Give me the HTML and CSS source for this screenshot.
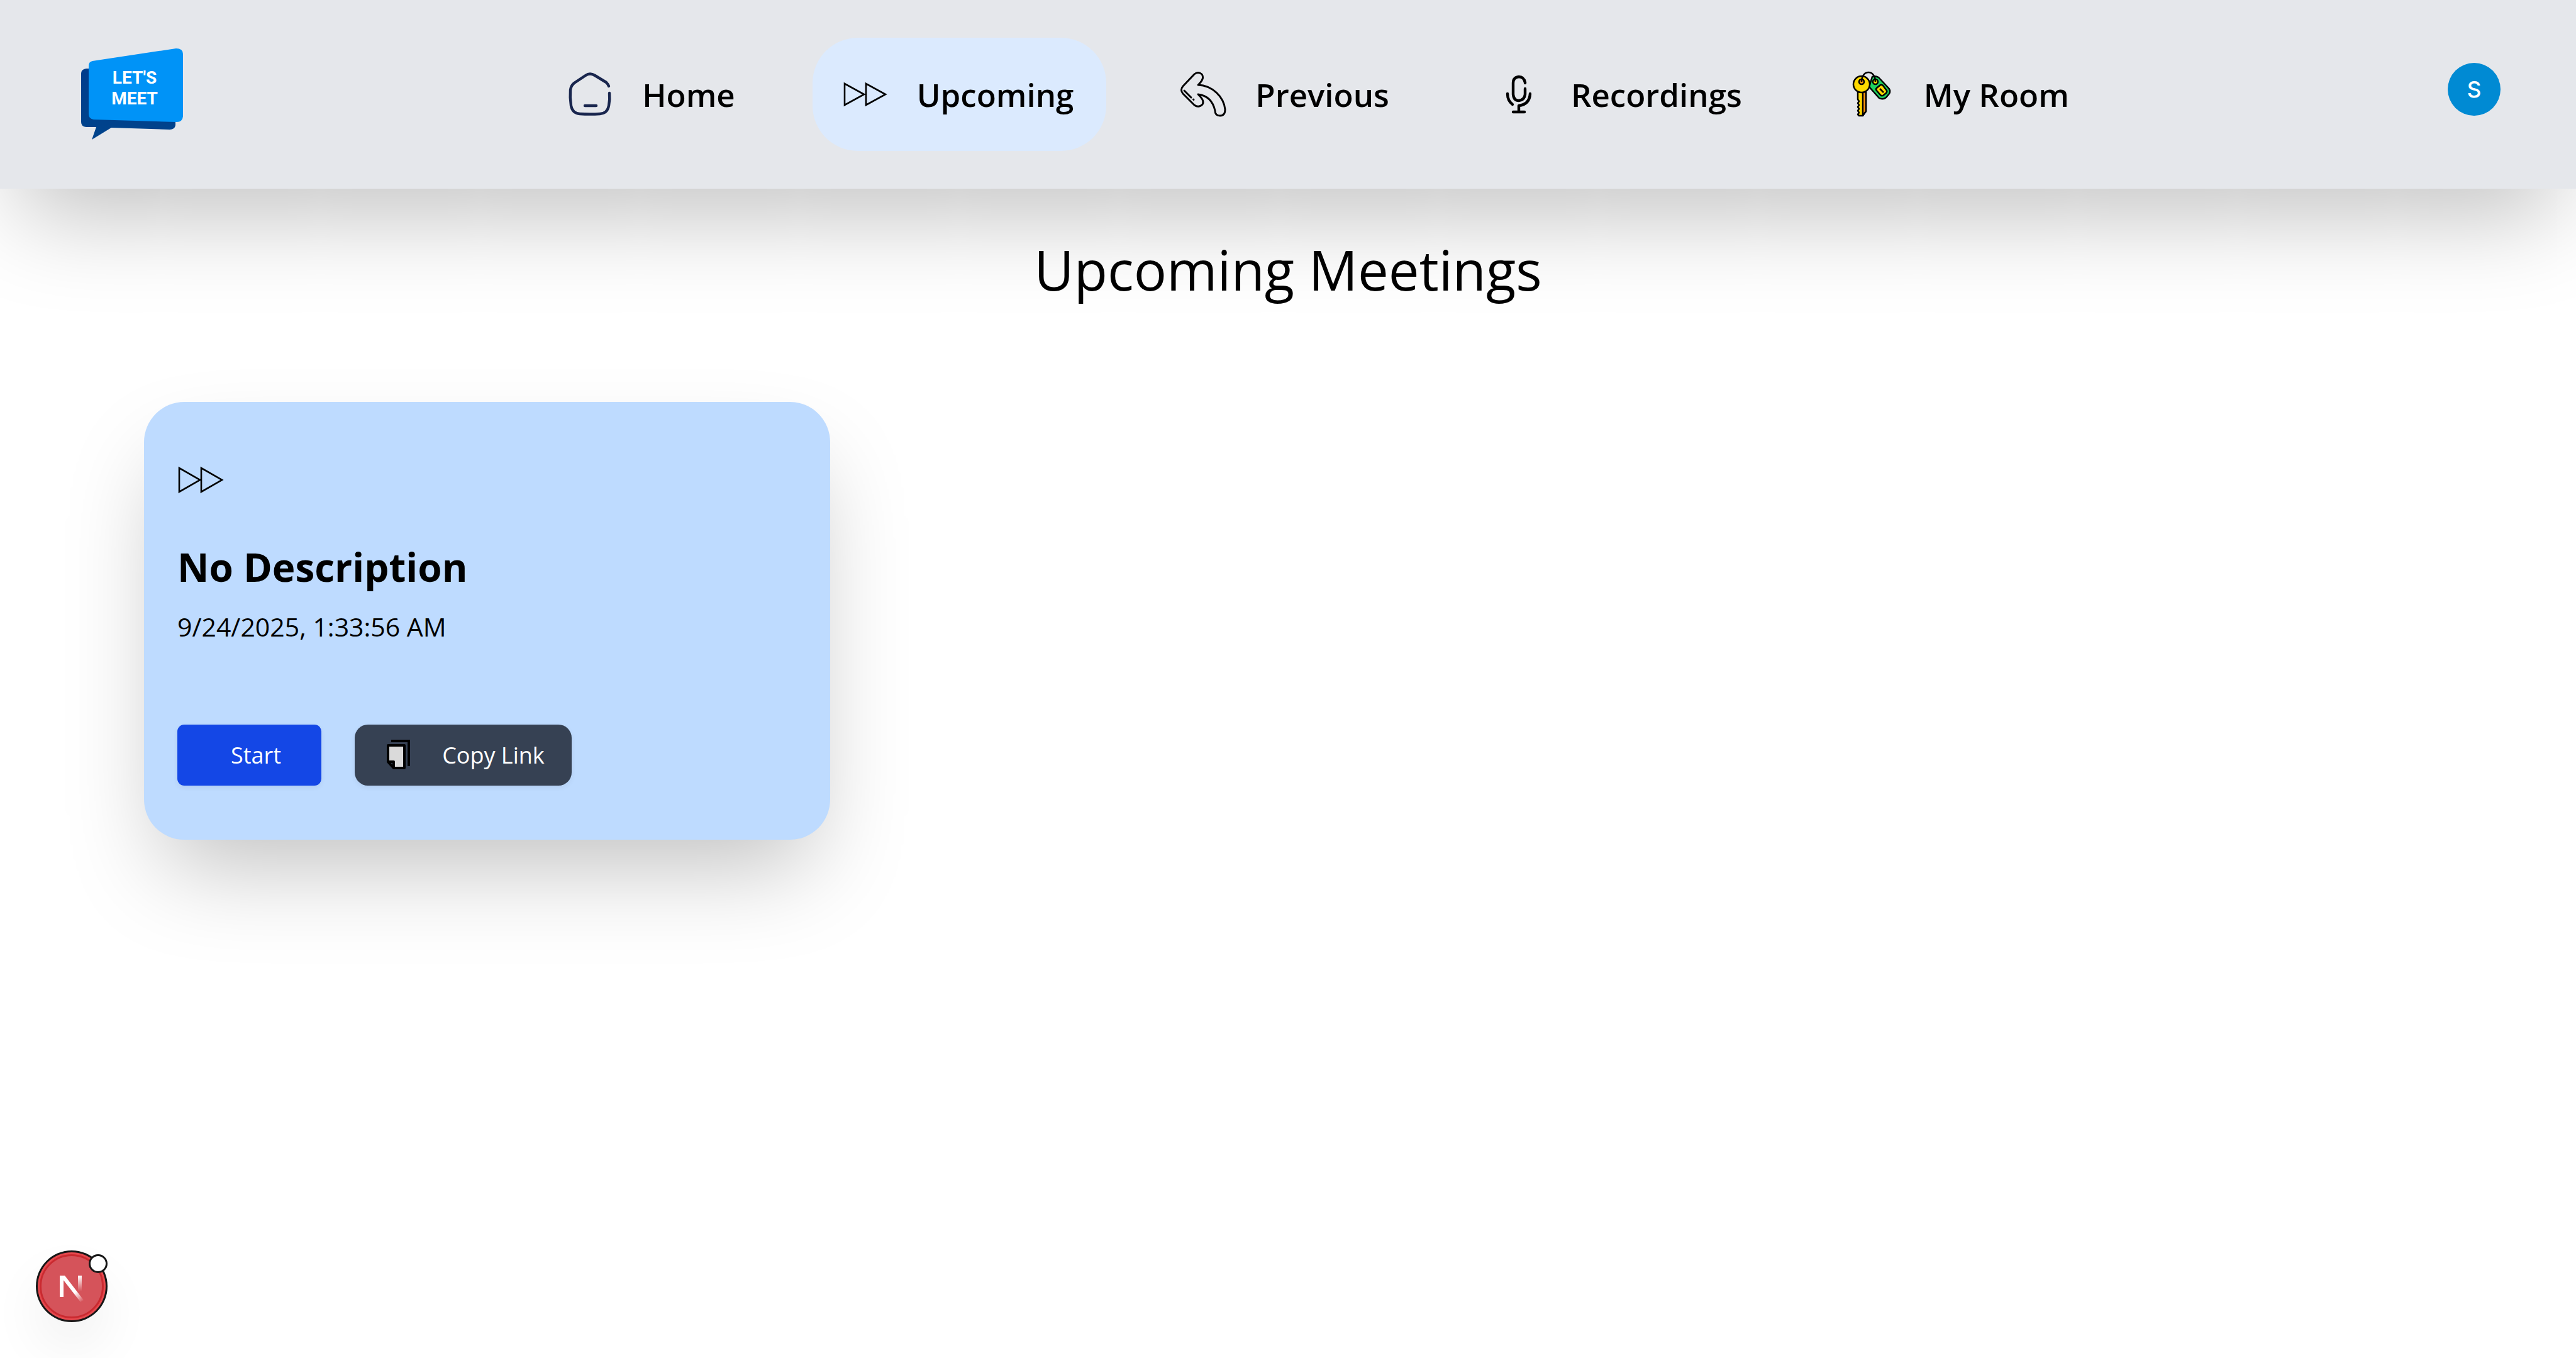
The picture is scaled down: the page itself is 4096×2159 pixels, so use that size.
FILE: index.html
```html
<!DOCTYPE html>
<html lang="en">
<head>
<meta charset="utf-8">
<title>Let's Meet</title>
<link rel="stylesheet" href="styles.css">
</head>
<body>
<header class="header">
  <a class="logo" href="#" aria-label="Let's Meet">
    <svg class="logo-art" viewBox="0 0 162 146" aria-hidden="true">
      <defs>
        <linearGradient id="tail" x1="0" y1="0" x2="0" y2="1"><stop offset="0" stop-color="#003c8c"/><stop offset="1" stop-color="#00448c"/></linearGradient>
      </defs>
      <path d="M8 32H140L150 118V122Q149 129 141 129L48 126L17 145L24 125L8 125Q0 124 0 117V40Q0 33 8 32Z" fill="url(#tail)"/>
      <path d="M18 20L151 0Q162 0 162 9V108Q161 117 152 117L20 113Q12 112 12 104V28Q12 21 18 20Z" fill="#0093f7"/>
    </svg>
    <span class="logo-text">LET'S<br>MEET</span>
  </a>
  <nav class="nav">
    <a class="nav-item" href="#">
      <svg class="icon" viewBox="0 0 80 80" fill="none" stroke="#19264e" stroke-width="4.4" stroke-linecap="round" stroke-linejoin="round"><path d="M70 27Q69 24 66 21L48 10Q40 5 33 10L15 22Q10 26 9 33Q8 45 10 58Q12 70 24 71Q40 72 56 71Q68 70 70 58Q72 48 71 38M32 58H50"/></svg>
      <span>Home</span>
    </a>
    <a class="nav-item active" href="#" aria-current="page">
      <svg class="icon" viewBox="0 0 80 80" fill="none" stroke="#000" stroke-width="2.6"><path d="M8 23V57L39 40ZM42 23V57L73 40Z"/></svg>
      <span>Upcoming</span>
    </a>
    <a class="nav-item" href="#">
      <svg class="icon" viewBox="0 0 80 80" fill="none" stroke="#000" stroke-width="2.9" stroke-linecap="round" stroke-linejoin="round"><path d="M26 8Q32 3 38 8Q43 15 32 25C55 26 73 44 75 64Q75 74 67 74Q59 74 59 66C56 52 48 42 32 40Q43 50 39 56Q33 62 26 57L8 39Q3 33 8 27ZM10 34L21 45M24.500 48L25 48.500"/></svg>
      <span>Previous</span>
    </a>
    <a class="nav-item" href="#">
      <svg class="icon" viewBox="0 0 80 80" fill="none" stroke="#000" stroke-width="4.4" stroke-linecap="round" stroke-linejoin="round"><path d="M50 22V21Q48 12 40 12Q31 13 31 22V40Q32 50 40 50Q49 49 50 40V31M22 39Q22 50 30 56M58 39Q57 56 40 58V67M31 68H49"/></svg>
      <span>Recordings</span>
    </a>
    <a class="nav-item" href="#">
      <svg class="icon" viewBox="0 0 80 80" stroke="#000" stroke-width="2.5" stroke-linejoin="round"><path d="M41 12Q46 10 51 13L66 29Q71 34 68 39L63 45Q58 49 52 46L36 28Z" fill="#1fd15f"/><path d="M48 30L54 25Q56 24 58 26L64 34Q65 36 63 38L58 42Q56 43 54 41L48 34Q46 32 48 30Z" fill="#ffda00"/><path d="M53 31L59 37" fill="none"/><path d="M18 36H31V67L26 74H20L18 72L20 69L18 66L20 63L18 60L20 57L18 54L20 51L18 48Z" fill="#ffda00"/><path d="M26 36H31V67L26 73Z" fill="#ff9811"/><circle cx="24" cy="24" r="13" fill="#ffda00"/><circle cx="24" cy="20" r="4" fill="#ff9811"/><circle cx="46" cy="20" r="4" fill="#ffda00"/><path d="M24 20C24 0 46 0 46 20" fill="none"/></svg>
      <span>My Room</span>
    </a>
  </nav>
  <button class="avatar" type="button" aria-label="Account">S</button>
</header>

<main class="main">
  <h1 class="title">Upcoming Meetings</h1>
  <section class="grid">
    <article class="card">
      <svg class="icon" viewBox="0 0 80 80" fill="none" stroke="#000" stroke-width="2.6" aria-hidden="true"><path d="M3 21V59L36 40ZM38 21V59L71 40Z"/></svg>
      <h2 class="card-title">No Description</h2>
      <p class="card-date">9/24/2025, 1:33:56 AM</p>
      <div class="actions">
        <button class="btn btn-start" type="button">Start</button>
        <button class="btn btn-copy" type="button">
          <svg class="btn-icon" viewBox="0 0 53 53"><path d="M15 4H43V44" fill="none" stroke="#000" stroke-width="4"/><path d="M10 11H36V47H19L10 37Z" fill="#dadada" stroke="#000" stroke-width="4" stroke-linejoin="round"/><path d="M10 37H19V47Z" fill="#364153" stroke="#000" stroke-width="4" stroke-linejoin="round"/></svg>
          Copy Link
        </button>
      </div>
    </article>
  </section>
</main>

<button class="dev-badge" type="button" aria-label="Open dev tools">
  <svg viewBox="0 0 114 114" aria-hidden="true">
    <defs>
      <linearGradient id="stem" x1="0" y1="40" x2="0" y2="65" gradientUnits="userSpaceOnUse"><stop offset="0" stop-color="#fff"/><stop offset="1" stop-color="#fff" stop-opacity="0"/></linearGradient>
      <linearGradient id="diag" x1="62" y1="67" x2="74" y2="82" gradientUnits="userSpaceOnUse"><stop offset="0" stop-color="#fff"/><stop offset="1" stop-color="#fff" stop-opacity="0"/></linearGradient>
    </defs>
    <circle cx="57" cy="57" r="57" fill="#171717"/>
    <circle cx="57" cy="57" r="54" fill="#e5484d"/>
    <circle cx="57" cy="57" r="49.500" fill="#d5535a" stroke="#ca2a30" stroke-width="3"/>
    <path d="M38 40H44V74H38Z" fill="#fff"/>
    <path d="M38 40H46L76 79L71 82L43 46Z" fill="url(#diag)"/>
    <path d="M67 40H73V65H67Z" fill="url(#stem)"/>
    <circle cx="99" cy="21" r="13.500" fill="#fff" stroke="#171717" stroke-width="3"/>
  </svg>
</button>
</body>
</html>
```
FILE: styles.css
```css
* {
  box-sizing: border-box;
}

body {
  margin: 0;
  min-height: 100vh;
  background: #fff;
  color: #000;
  font-family: "Open Sans", "Noto Sans", sans-serif;
}

.header {
  display: flex;
  align-items: center;
  justify-content: space-between;
  height: 300px;
  padding: 0 120px 0 129px;
  background: #e5e7eb;
  box-shadow: 0 72px 150px -32px rgba(0, 0, 0, 0.25);
}

.logo {
  position: relative;
  width: 162px;
  height: 146px;
  color: #fff;
  text-decoration: none;
}

.logo-art {
  display: block;
  width: 100%;
}

.logo-text {
  position: absolute;
  top: 30px;
  left: 12px;
  width: 146px;
  font: 700 28px/33px "Roboto", sans-serif;
  text-align: center;
}

.nav {
  display: flex;
  gap: 71px;
  margin-left: 14px;
}

.nav-item {
  display: flex;
  align-items: center;
  gap: 43px;
  height: 180px;
  padding: 0 52px 0 43px;
  border-radius: 72px;
  color: #000;
  font-size: 51px;
  font-weight: 600;
  line-height: 75px;
  text-decoration: none;
}

.nav-item.active {
  background: #dbeafe;
}

.icon {
  display: block;
  width: 80px;
  height: 80px;
}

.avatar {
  width: 84px;
  height: 84px;
  margin-bottom: 16px;
  padding: 0;
  border: 0;
  border-radius: 50%;
  background: #008ad3;
  color: #fff;
  font: 500 35px/84px "Inter", sans-serif;
}

.main {
  padding: 64px 229px;
}

.title {
  margin: 0;
  font-size: 87px;
  font-weight: 400;
  line-height: 128px;
  text-align: center;
}

.grid {
  display: grid;
  grid-template-columns: repeat(3, 1fr);
  gap: 182px;
  margin-top: 147px;
}

.card {
  padding: 84px 53px 86px;
  border-radius: 64px;
  background: #bedbff;
  box-shadow: 0 72px 150px -32px rgba(0, 0, 0, 0.25);
}

.card-title {
  margin: 56px 0 0;
  font-size: 62px;
  line-height: 85px;
}

.card-date {
  margin: 20px 0 0;
  font-size: 41px;
  line-height: 64px;
}

.actions {
  display: flex;
  gap: 53px;
  margin-top: 124px;
}

.btn {
  display: flex;
  align-items: center;
  height: 97px;
  border: 0;
  color: #fff;
  font-family: inherit;
  font-size: 36px;
  box-shadow: 0 3px 8px rgba(0, 0, 0, 0.06);
}

.btn-start {
  padding: 0 64px 0 85px;
  border-radius: 11px;
  background: #1447e6;
}

.btn-copy {
  gap: 43px;
  padding: 0 43px;
  border-radius: 21px;
  background: #364153;
}

.btn-icon {
  width: 53px;
  height: 53px;
}

.dev-badge {
  position: fixed;
  bottom: 57px;
  left: 57px;
  width: 114px;
  height: 114px;
  padding: 0;
  border: 0;
  border-radius: 50%;
  background: none;
  box-shadow: 0 42px 85px rgba(0, 0, 0, 0.06);
}

.dev-badge svg {
  display: block;
}
```
